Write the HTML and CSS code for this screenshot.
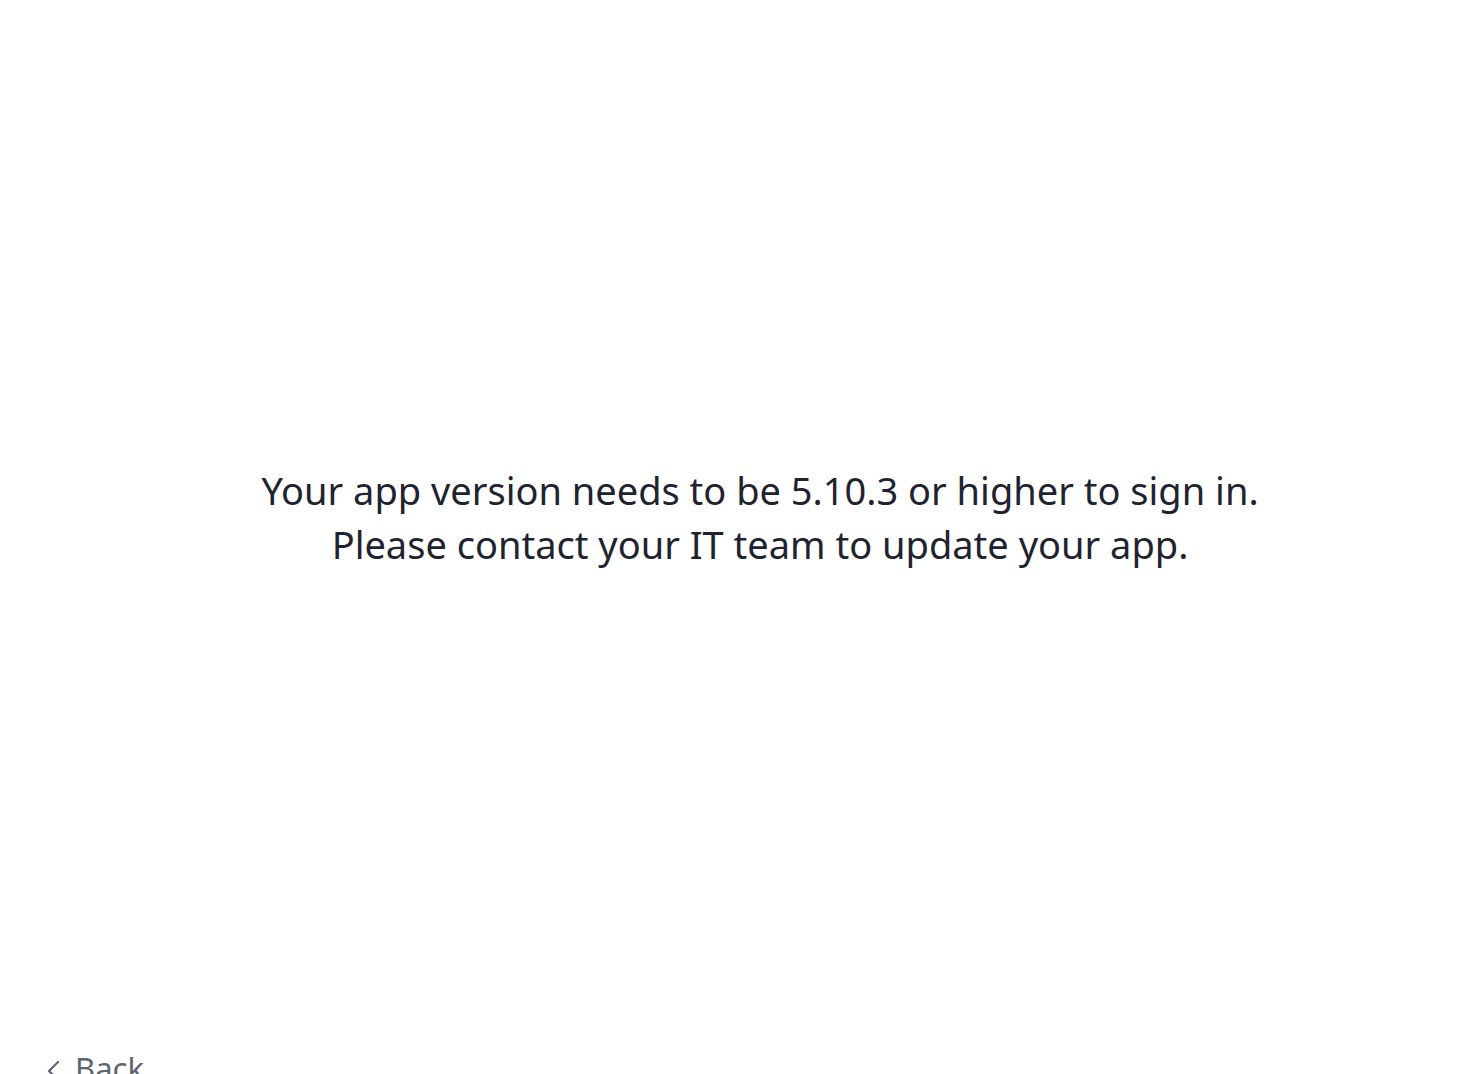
FILE: index.html
```html
<!DOCTYPE html>
<html lang="en">
<head>
<meta charset="utf-8">
<title>Update required</title>
<link rel="stylesheet" href="styles.css">
</head>
<body>
<div class="page">
  <main class="content">
    <p class="message">Your app version needs to be 5.10.3 or higher to sign in.<br>Please contact your IT team to update your app.</p>
  </main>
  <footer class="footer">
    <a class="back" href="#"><svg class="chev" width="14" height="20" viewBox="0 0 14 20"><path d="M12 1 L3 10 L12 19" fill="none" stroke="currentColor" stroke-width="2.2" stroke-linecap="round" stroke-linejoin="round"/></svg><span>Back</span></a>
  </footer>
</div>
</body>
</html>
```
FILE: styles.css
```css
html, body {
  margin: 0;
  padding: 0;
  background: #fff;
  overflow: hidden;
}
body {
  font-family: "Noto Sans", "Open Sans", sans-serif;
  color: #1f2330;
}
.page {
  height: 1074px;
  display: flex;
  flex-direction: column;
}
.content {
  flex: 1;
  display: flex;
  align-items: center;
  justify-content: center;
  padding-left: 56px;
  padding-bottom: 10px;
}
.message {
  margin: 0;
  font-size: 38px;
  line-height: 54px;
  text-align: center;
}
.footer {
  box-sizing: border-box;
  height: 30px;
  flex-shrink: 0;
  padding-left: 46px;
  padding-top: 4px;
  overflow: visible;
}
.back {
  display: inline-flex;
  align-items: flex-start;
  gap: 15px;
  color: #5f6570;
  text-decoration: none;
  font-size: 31px;
  line-height: 40px;
}
.chev {
  margin-top: 13px;
}
```
